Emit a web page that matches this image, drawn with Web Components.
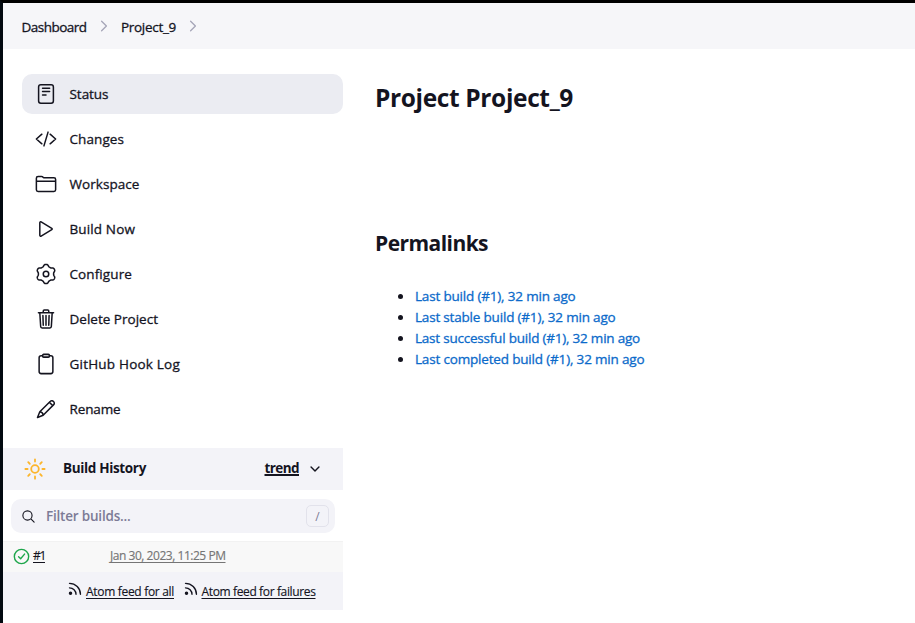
<!DOCTYPE html>
<html lang="en">
<head>
<meta charset="utf-8">
<title>Project_9</title>
<style>
html,body{margin:0;height:100%;overflow:hidden;background:#fff}
body{font-family:"Open Sans","Noto Sans",sans-serif;font-size:13.5px;color:#14141f}
</style>
</head>
<body>
<job-page></job-page>
<script>
const define = (name, html, init) => customElements.define(name, class extends HTMLElement {
  connectedCallback() {
    if (this.shadowRoot) return;
    const root = this.attachShadow({ mode: 'open' });
    const t = document.createElement('template');
    t.innerHTML = html;
    root.append(t.content.cloneNode(true));
    if (init) init.call(this, root);
  }
});

/* Six-lobed gear outline with a round hub. */
const gear = () => {
  let d = '';
  for (let i = 0; i <= 120; i++) {
    const a = i / 120 * Math.PI * 2;
    const r = 200 + 23 * Math.tanh(1.5 * Math.cos(6 * a)) / .9;
    d += (i ? 'L' : 'M') + (256 + r * Math.sin(a)).toFixed(1) + ' ' + (256 - r * Math.cos(a)).toFixed(1);
  }
  return '<path d="' + d + 'Z"/><circle cx="256" cy="256" r="64"/>';
};

const ICONS = {
  status: '<rect x="84" y="40" width="344" height="432" rx="52"/><path d="M176 120h164M176 200h164M176 280h80"/>',
  changes: '<path d="M160 368 32 256l128-112M352 368l128-112-128-112M304 96l-96 320"/>',
  workspace: '<path d="M440 432H72a40 40 0 0 1-40-40V120a40 40 0 0 1 40-40h75.9a40 40 0 0 1 22.2 6.7l27.8 18.6a40 40 0 0 0 22.2 6.7H440a40 40 0 0 1 40 40v240a40 40 0 0 1-40 40zM32 192h448"/>',
  build: '<path d="M112 111v290c0 17.4 17 28.5 31 20.200l247.500-148.400c12.100-7.200 12.100-26.300 0-33.500L143 90.800c-14-8.300-31 2.800-31 20.200z"/>',
  configure: gear(),
  trash: '<path d="m112 112 20 320c1 18.500 14.400 32 32 32h184c17.700 0 30.900-13.500 32-32l20-320M80 112h352M192 112V72a24 24 0 0 1 24-24h80a24 24 0 0 1 24 24v40M256 176v224M184 176l8 224M328 176l-8 224"/>',
  clipboard: '<path d="M336 64h32a48 48 0 0 1 48 48v320a48 48 0 0 1-48 48H144a48 48 0 0 1-48-48V112a48 48 0 0 1 48-48h32"/><rect x="176" y="32" width="160" height="64" rx="26"/>',
  rename: '<path d="M358 76 112 322 58 454l132-54 246-246c46-46-34-124-78-78zM334 100l78 78M112 322c38 4 74 36 78 78"/>',
  sun: '<path d="M256 32v52M256 428v52M414 98l-36 36M134 378l-36 36M480 256h-52M84 256H32M414 414l-36-36M134 134 98 98"/><circle cx="256" cy="256" r="88"/>',
  search: '<path d="M221 64a157 157 0 1 0 157 157A157 157 0 0 0 221 64zM338 338l110 110"/>',
  down: '<path d="m112 184 144 144 144-144"/>',
  right: '<path d="m168 80 176 176-176 176"/>',
  check: '<circle cx="256" cy="256" r="216"/><path d="M348 184 230 322l-62-58"/>',
  rss: '<path d="M80 75c193 0 350 157 350 350M80 218c115 0 208 93 208 208"/><circle cx="112" cy="394" r="34" fill="currentColor"/>'
};

define('ui-icon', `<style>:host{display:block;flex:none;width:var(--s,22px);height:var(--s,22px)}svg{display:block;width:100%;height:100%;fill:none;stroke:currentColor;stroke-linecap:round;stroke-linejoin:round}</style><svg viewBox="0 0 512 512"></svg>`,
function (r) {
  const s = r.querySelector('svg');
  s.style.strokeWidth = this.getAttribute('stroke') || 35;
  s.innerHTML = ICONS[this.getAttribute('name')];
});

/* Text run tracked to a given advance width. */
define('ui-text', `<style>:host{display:inline-block;white-space:nowrap;-webkit-text-stroke:var(--w,0) currentColor}</style><span><slot></slot></span>`,
function (r) {
  const span = r.querySelector('span'), w = +this.getAttribute('w');
  const n = this.textContent.length;
  span.style.letterSpacing = ((w - span.getBoundingClientRect().width) / n).toFixed(3) + 'px';
});

define('crumb-bar', `<style>
:host{display:flex;align-items:center;height:46px;box-sizing:border-box;padding:2px 0 0 18.500px;background:#f6f6f9;--w:.3px}
ui-icon{--s:14px;color:#a5a5b8;margin:-3px 10.500px 0 10px}
</style><ui-text w="65">Dashboard</ui-text><ui-icon name="right" stroke="48"></ui-icon><ui-text w="55">Project_9</ui-text><ui-icon name="right" stroke="48"></ui-icon>`);

define('task-link', `<style>
:host{display:flex;align-items:center;gap:12.5px;height:40px;box-sizing:border-box;padding-left:13px;border-radius:10px;color:#14141f;--w:.3px}
:host([active]){background:#ebecf2}
</style><ui-icon></ui-icon><ui-text></ui-text>`,
function (r) {
  const i = document.createElement('ui-icon');
  i.setAttribute('name', this.getAttribute('icon'));
  r.querySelector('ui-icon').replaceWith(i);
  const t = document.createElement('ui-text');
  t.setAttribute('w', this.getAttribute('w'));
  t.textContent = this.getAttribute('label');
  r.querySelector('ui-text').replaceWith(t);
});

define('task-list', `<style>:host{display:flex;flex-direction:column;gap:5px;padding:25px 0 0 19px}</style>
<task-link active icon="status" label="Status" w="39"></task-link>
<task-link icon="changes" label="Changes" w="54.500"></task-link>
<task-link icon="workspace" label="Workspace" w="70"></task-link>
<task-link icon="build" label="Build Now" w="65.500"></task-link>
<task-link icon="configure" label="Configure" w="62.500"></task-link>
<task-link icon="trash" label="Delete Project" w="88.500"></task-link>
<task-link icon="clipboard" label="GitHub Hook Log" w="110.500"></task-link>
<task-link icon="rename" label="Rename" w="51"></task-link>`);

define('build-history', `<style>
:host{display:block;margin-top:19px}
.head{display:flex;align-items:center;height:42px;box-sizing:border-box;padding:0 21px 0 21px;background:#f3f3f8;font-weight:700;font-size:13.500px}
.head>ui-icon:first-child{color:#fcb52b}
.head ui-text{margin-top:-3px}
.title{margin-left:17px}
.trend{margin-left:auto}
.head .down{--s:14px;margin-left:9px}
u{text-decoration:underline;text-underline-offset:2px;text-decoration-thickness:1px}
.trend u{text-decoration-thickness:2px;text-underline-offset:1px}
.filter{display:flex;align-items:center;height:34px;margin:9px 8px 8px;box-sizing:border-box;padding:0 6px 0 10px;border-radius:10px;background:#f3f3f8;color:#7c7b96;font-weight:600}
.filter ui-icon{--s:15px;color:#14141f;margin-right:10px}
.key{display:flex;align-items:center;justify-content:center;margin-left:auto;width:23px;height:22px;box-sizing:border-box;border:1px solid #e2e2eb;border-radius:5px;font-size:12px;font-weight:500}
.row{display:flex;align-items:center;height:31px;box-sizing:border-box;padding:0 0 1px 9.500px;background:#f8f8f8;border-top:1px solid #f2f2f2;font-size:12px;--w:.15px}
.row ui-icon{--s:17px;color:#1ea64b}
.row ui-text{margin-top:-2px}
.num{margin-left:3.500px}
.date{margin-left:65px;color:#757575}
.feeds{display:flex;align-items:center;height:38px;box-sizing:border-box;padding:0 27.500px 0 0;justify-content:flex-end;background:#f3f3f8;font-size:12px;--w:.15px}
.feeds ui-icon{--s:16px;margin:-5px 3px 0 8.500px}
</style>
<div class="head"><ui-icon name="sun" stroke="42"></ui-icon><ui-text class="title" w="83">Build History</ui-text><ui-text class="trend" w="34.500"><u>trend</u></ui-text><ui-icon class="down" name="down" stroke="52"></ui-icon></div>
<div class="filter"><ui-icon name="search" stroke="38"></ui-icon><ui-text w="84.500">Filter builds...</ui-text><span class="key">/</span></div>
<div class="row"><ui-icon name="check" stroke="42"></ui-icon><ui-text class="num" w="12"><u>#1</u></ui-text><ui-text class="date" w="115.500"><u>Jan 30, 2023, 11:25 PM</u></ui-text></div>
<div class="feeds"><ui-icon name="rss" stroke="44"></ui-icon><ui-text w="88"><u>Atom feed for all</u></ui-text><ui-icon name="rss" stroke="44"></ui-icon><ui-text w="114"><u>Atom feed for failures</u></ui-text></div>`);

define('side-panel', `<style>:host{display:block;width:340px;flex:none}</style><task-list></task-list><build-history></build-history>`);

define('job-main', `<style>
:host{display:block;padding:31px 0 0 32px}
h1,h2{margin:0;font-weight:700}
h1{font-size:24.500px;line-height:36px}
h2{font-size:21px;line-height:30px;margin-top:112px}
ul{margin:27px 0 0;padding:0 0 0 40px;line-height:21px}
li{height:21px}
li::marker{color:#14141f;font-size:15px}
a{color:#0b6aca;--w:.3px}
</style>
<h1><ui-text w="198">Project Project_9</ui-text></h1>
<h2><ui-text w="113">Permalinks</ui-text></h2>
<ul>
<li><a><ui-text w="160.500">Last build (#1), 32 min ago</ui-text></a></li>
<li><a><ui-text w="200.500">Last stable build (#1), 32 min ago</ui-text></a></li>
<li><a><ui-text w="225">Last successful build (#1), 32 min ago</ui-text></a></li>
<li><a><ui-text w="229.500">Last completed build (#1), 32 min ago</ui-text></a></li>
</ul>`);

define('job-page', `<style>
:host{display:block;height:623px;box-sizing:border-box;border-top:3px solid #000;border-left:3px solid #020910;background:#fff}
.cols{display:flex}
</style><crumb-bar></crumb-bar><div class="cols"><side-panel></side-panel><job-main></job-main></div>`);
</script>
</body>
</html>
